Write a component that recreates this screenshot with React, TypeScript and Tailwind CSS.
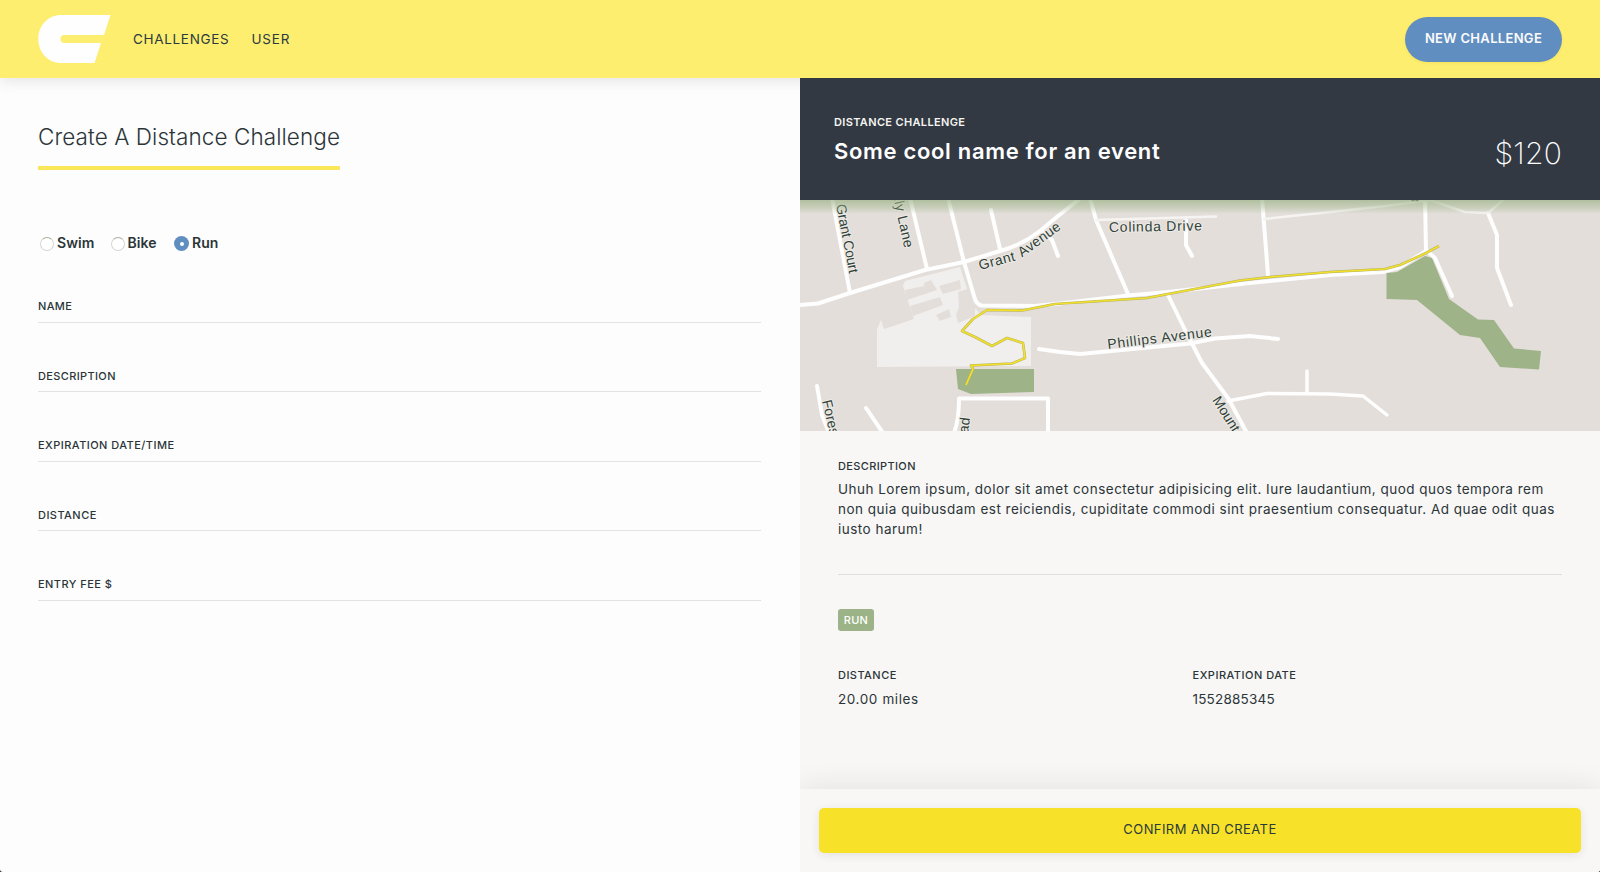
const labelClass = "text-[11px] leading-4 font-medium whitespace-nowrap";

const routePath =
  "M966 385 973 369 971 365.500 1012 363.500 1025 358 1023 343 1007 338 992 346 975 337 962 331 973 319 987 310 1022 310.500 1055 304 1070 303 1147 298 1168 294 1240 280.500 1270 277 1330 272 1385 269 1400 265 1426 253 1439 246";

function Logo() {
  return (
    <svg width="73" height="48" viewBox="0 0 73 48" fill="#fefefe" aria-label="Home">
      <path d="M23.5 0H72.5L66 20H26.5a4 4 0 0 0 0 8H63L56.5 48H23.5C10 48 0.3 37.500 0.300 24S10 0 23.500 0Z" />
    </svg>
  );
}

function Header() {
  return (
    <header className="flex h-[78px] shrink-0 items-center bg-[#fdee70] pl-[38px] pr-[38px] shadow-[0_3px_14px_rgba(0,0,0,0.1)]">
      <Logo />
      <nav className="ml-[22px] flex flex-1 items-center gap-[22px] text-[13.5px] text-[#2b3a41]">
        <a className="tracking-[0.68px]">CHALLENGES</a>
        <a className="tracking-[0.8px]">USER</a>
      </nav>
      <button className="flex h-[45px] w-[157px] items-center justify-center rounded-full bg-[#618ec1] text-[13px] font-semibold tracking-[0.32px] whitespace-nowrap text-[#fbfbfb] shadow-[0_1px_3px_rgba(220,190,0,0.2)]">
        NEW CHALLENGE
      </button>
    </header>
  );
}

function Radio({ label, checked = false, className }: { label: string; checked?: boolean; className: string }) {
  return (
    <label className={`flex items-center text-sm font-semibold ${className}`}>
      {checked ? (
        <span className="mt-px flex size-[15px] items-center justify-center rounded-full bg-[#618ec1]">
          <span className="size-1 rounded-full bg-white" />
        </span>
      ) : (
        <span className="mt-px size-[14px] rounded-full border border-[#d9d6d2] border-t-[#a9b39d] bg-white" />
      )}
      <span className="ml-[3px]">{label}</span>
    </label>
  );
}

function Field({ label, className }: { label: string; className: string }) {
  return (
    <div className="flex h-[69.500px] flex-col justify-end border-b border-[#e4e2e0] pb-[7.500px]">
      <span className={`${labelClass} ${className}`}>{label}</span>
    </div>
  );
}

function ChallengeForm() {
  return (
    <section className="flex w-1/2 flex-col items-start pt-[45px] pr-[39px] pl-[38px]">
      <h1 className="w-[302px] border-b-4 border-[#fbe85a] pb-[15px] text-[22.5px] leading-7 font-light tracking-[0.08px] whitespace-nowrap">
        Create A Distance Challenge
      </h1>
      <div className="mt-[63px] flex h-5 items-center pl-[2px]">
        <Radio label="Swim" className="w-[70.500px] tracking-[0.050px]" />
        <Radio label="Bike" className="w-[63.500px] tracking-[0.100px]" />
        <Radio label="Run" checked className="tracking-[0.050px]" />
      </div>
      <div className="w-full">
        <Field label="NAME" className="tracking-[0.35px]" />
        <Field label="DESCRIPTION" className="tracking-[0.36px]" />
        <Field label="EXPIRATION DATE/TIME" className="tracking-[0.46px]" />
        <Field label="DISTANCE" className="tracking-[0.46px]" />
        <Field label="ENTRY FEE $" className="tracking-[0.46px]" />
      </div>
    </section>
  );
}

function RouteMap() {
  return (
    <svg className="block h-[231px] w-full shrink-0 bg-[#e3deda]" viewBox="800 200 800 231" preserveAspectRatio="none">
      <defs>
        <linearGradient id="edge" x1="0" y1="0" x2="0" y2="1">
          <stop offset="0" stopColor="#9cb387" stopOpacity="0.7" />
          <stop offset="0.5" stopColor="#9cb387" stopOpacity="0.4" />
          <stop offset="1" stopColor="#9cb387" stopOpacity="0" />
        </linearGradient>
      </defs>
      <path
        fill="#f1efed"
        d="M877 329 881 320 884 329 914 319 903 286 905 281 960 267 967 289 958 292 959 307 956 315 958 323 975 316 975 308 981 315 1031 317V366L877 367Z"
      />
      <path
        fill="#e3deda"
        d="M905 290 924 286V283L931 280 937 290 907 300ZM910 306 940 297 943 305 913 316ZM939 286 960 280 961 289 943 294ZM936 315 949 309 951 317 940 321Z"
      />
      <g fill="none" stroke="#fefefe" strokeWidth="4" strokeLinejoin="round" strokeLinecap="round">
        <path d="M800 305 818 303.500 850 293 925 270 964 262 1000 251Q1022 245 1040 231L1058 216 1082 197" />
        <path d="M832 198 850 293M910 198 927 269" />
        <path d="M948 198 964 262 974 296Q976 305 982 305.500L1035 306 1060 303.500 1128 295.500 1168 292 1250 283 1330 275 1383 272 1400 267 1426 251" />
        <path d="M991 210 1000 249M1043 232 1052 240 1058 256" />
        <path d="M1090 198 1096 220 1128 294M1186 220V245L1192 256M1262 198 1268 275" />
        <path d="M1425 198 1426 250 1435 258 1452 296M1488 213 1497 235V268L1511 305" />
        <path d="M1039 349 1060 352 1080 354 1190 343.500 1215 338.500 1250 336 1278 339" />
        <path d="M1168 295 1185 330 1202 363 1228 398 1247 433" />
        <path strokeWidth="3.500" d="M1228 401 1267 393.500 1330 394 1363 396 1387 415M1307 371V393" />
        <path d="M817 386 822 415 829 433M866 408 883 433M954 433Q959 420 959 398.500H1048V433" />
        <path strokeWidth="2.500" stroke="#f6f4f2" d="M1096 220 1216 216.500M1264 219 1330 212 1385 206 1430 200 1465 212 1488 213 1503 200" />
      </g>
      <g fill="#9fb389">
        <path d="M956 369H1034V392L971 394 958 389Z" />
        <path d="M1386.500 273 1397 272 1425 256 1432 258 1449 299 1478 319.500 1494 320 1514 348.500 1541 351 1539 369.500 1500 367 1480 338 1460 335 1417 300 1386.500 299Z" />
      </g>
      <g fill="none" strokeLinejoin="round">
        <path stroke="#b3b45c" strokeWidth="2.600" d={routePath} />
        <path stroke="#f3df2c" strokeWidth="1.700" d={routePath} />
      </g>
      <g
        className="font-['Liberation_Sans',sans-serif] text-[14px]"
        fill="#2e4238"
        stroke="#eeeae6"
        strokeWidth="2"
        paintOrder="stroke"
      >
        <text transform="translate(836 205) rotate(79)" textLength="70">Grant Court</text>
        <text transform="translate(889.500 181) rotate(77.500)" textLength="69">Kelly Lane</text>
        <text transform="translate(980 270) rotate(-15)" textLength="37">Grant</text>
        <text transform="translate(1022 257.500) rotate(-36)" textLength="49">Avenue</text>
        <text transform="translate(1109 232) rotate(-1)" textLength="93">Colinda Drive</text>
        <text transform="translate(1108 349) rotate(-7)" textLength="105">Phillips Avenue</text>
        <text transform="translate(1212 400) rotate(58)">Mount</text>
        <text transform="translate(822 401) rotate(77)">Forest</text>
        <text transform="translate(970 418) rotate(-83)" textAnchor="end">Road</text>
      </g>
      <path d="M1411.500 200.500h8" stroke="#3f4f48" strokeWidth="1.500" strokeDasharray="3 1" />
      <rect x="800" y="200" width="800" height="14" fill="url(#edge)" />
    </svg>
  );
}

function Preview() {
  return (
    <section className="relative flex w-1/2 flex-col overflow-hidden bg-[#f8f7f6]">
      <div className="flex h-[122px] shrink-0 justify-between bg-[#323943] pr-[38px] pl-[34px] text-white">
        <div className="pt-9">
          <p className="text-[11px] leading-4 font-semibold tracking-[0.350px] whitespace-nowrap text-[#f5f4f0]">
            DISTANCE CHALLENGE
          </p>
          <h2 className="mt-[7px] text-[22px] leading-7 font-semibold tracking-[0.68px] whitespace-nowrap">
            Some cool name for an event
          </h2>
        </div>
        <p className="pt-[57px] text-[30px] leading-[36px] font-extralight tracking-[0.2px]">$120</p>
      </div>
      <RouteMap />
      <div className="flex-1 px-[38px] pt-[26.500px]">
        <p className={`${labelClass} tracking-[0.36px]`}>DESCRIPTION</p>
        <p className="mt-[5.500px] text-[13.5px] leading-5 tracking-[0.49px] whitespace-nowrap">
          Uhuh Lorem ipsum, dolor sit amet consectetur adipisicing elit. Iure laudantium, quod quos tempora rem
          <br />
          non quia quibusdam est reiciendis, cupiditate commodi sint praesentium consequatur. Ad quae odit quas
          <br />
          iusto harum!
        </p>
        <hr className="mt-[35px] border-[#e2deda]" />
        <span className="mt-[34px] flex h-[22px] w-9 items-center justify-center rounded-[3px] bg-[#9bb386] pt-px text-[11px] font-medium tracking-[0.3px] text-white">
          RUN
        </span>
        <div className="mt-9 flex">
          <div className="w-[354.500px]">
            <p className={`${labelClass} tracking-[0.46px]`}>DISTANCE</p>
            <p className="mt-[6px] text-[13.5px] leading-5 tracking-[0.6px]">20.00 miles</p>
          </div>
          <div>
            <p className={`${labelClass} tracking-[0.5px]`}>EXPIRATION DATE</p>
            <p className="mt-[6px] text-[13.5px] leading-5 tracking-[0.2px]">1552885345</p>
          </div>
        </div>
      </div>
      <footer className="h-[83px] shrink-0 bg-[#f8f7f6] px-[19px] pt-[19px] shadow-[0_0_30px_rgba(60,40,20,0.11)]">
        <button className="h-[45px] w-full rounded-[5px] bg-[#f7e229] pb-[2px] text-[13px] tracking-[0.42px] text-[#2b3a3a] shadow-[0_2px_10px_rgba(60,40,20,0.1)]">
          CONFIRM AND CREATE
        </button>
      </footer>
    </section>
  );
}

export default function App() {
  return (
    <div className="bg-[#30343a]">
      <div className="flex h-[872px] flex-col overflow-hidden rounded-b-[3px] bg-[#fdfdfd] font-['Inter',sans-serif] text-[#2b3538]">
        <Header />
        <main className="flex flex-1">
          <ChallengeForm />
          <Preview />
        </main>
      </div>
    </div>
  );
}
